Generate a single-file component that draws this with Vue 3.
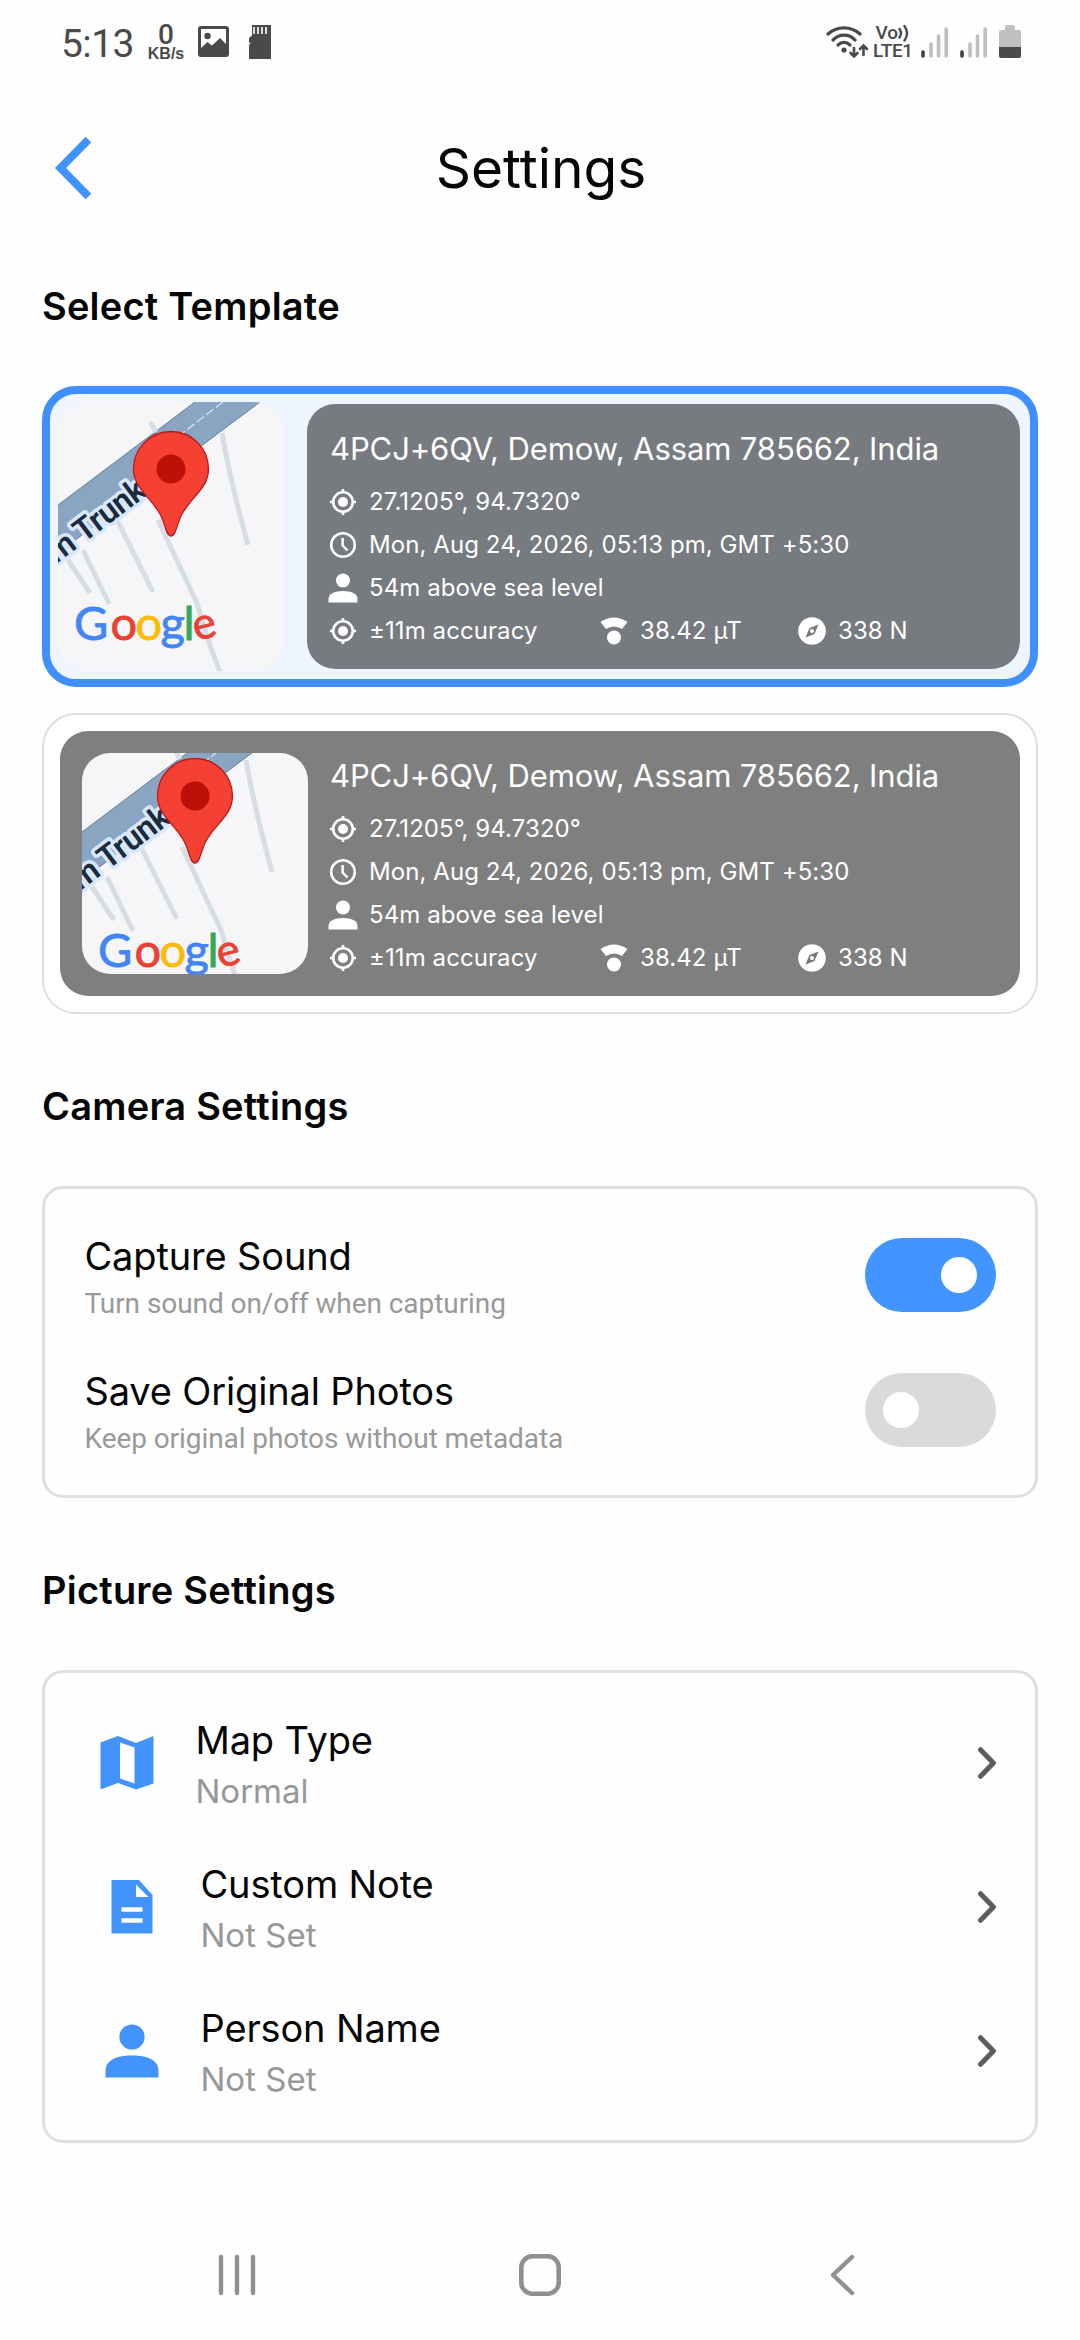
<script setup>
import { ref } from 'vue'

const templates = [
  { id: 'split', viewBox: '0 0 226 269' },
  { id: 'inset', viewBox: '0 24 226 221' }
]

const toggles = ref([
  { title: 'Capture Sound', note: 'Turn sound on/off when capturing', on: true },
  { title: 'Save Original Photos', note: 'Keep original photos without metadata', on: false }
])

const options = [
  { icon: 'map', title: 'Map Type', value: 'Normal' },
  { icon: 'doc', title: 'Custom Note', value: 'Not Set' },
  { icon: 'person', title: 'Person Name', value: 'Not Set' }
]
</script>

<template>
  <div class="screen">
    <header class="status">
      <span class="clock">5:13</span>
      <span class="speed"><b>0</b><i>KB/s</i></span>
      <svg class="pic" width="31" height="31" viewBox="0 0 31 31">
        <path fill-rule="evenodd" fill="#4a4a4a" d="M3 0H28A3 3 0 0 1 31 3V28A3 3 0 0 1 28 31H3A3 3 0 0 1 0 28V3A3 3 0 0 1 3 0ZM3 3V22L9.500 16 14 19.500 22 12 28 18V3Z" />
        <circle cx="9.500" cy="10" r="3.200" fill="#4a4a4a" />
      </svg>
      <svg class="sd" width="24" height="34" viewBox="0 0 24 34">
        <path fill="#4a4a4a" d="M4 0H23V34H1V20L2.500 18.500 1 17V13L4 10.500Z" />
        <path stroke="#fff" stroke-width="1.600" d="M6 2V9M10 2V9M14 2V9M18 2V9" />
      </svg>
      <span class="grow"></span>
      <svg class="wifi" width="43" height="34" viewBox="0 0 43 34" fill="none" stroke="#4a4a4a" stroke-width="3.200" stroke-linecap="round">
        <path d="M2 9C11 .8 25 .8 34 9M7 15C13.500 8.600 23 8.600 29 15M12 20C15.500 16.600 20.500 16.600 24 20" />
        <circle cx="18" cy="25" r="2.600" fill="#4a4a4a" stroke="none" />
        <path stroke-width="2.600" d="M28 23V31M24.500 28 28 31.500 31.500 28M37.500 30V21M34 24 37.500 20.500 41 24" />
      </svg>
      <span class="lte"><span class="vo">Vo<svg width="12" height="18" viewBox="0 0 12 18" fill="none" stroke="#4a4a4a" stroke-width="2.400" stroke-linecap="round"><path d="M1.500 5Q4.500 9 1.500 13.500M6.500 2Q11.500 9 6.500 16.500" /></svg></span><span class="l1">LTE1</span></span>
      <svg v-for="n in 2" :key="n" class="signal" width="28" height="32" viewBox="0 0 28 32" stroke-width="3.600" stroke-linecap="round">
        <path stroke="#404040" d="M2 25V29" />
        <path stroke="#bfbfbf" d="M10 17V29M17.500 9V29M25.200 2V29" />
      </svg>
      <svg class="battery" width="22" height="34" viewBox="0 0 22 34">
        <path fill="#c0c0c0" d="M6 5V2Q6 0 8 0H14Q16 0 16 2V5H20Q22 5 22 7V23H0V7Q0 5 2 5Z" />
        <path fill="#4a4a4a" d="M0 22H22V31Q22 33 20 33H2Q0 33 0 31Z" />
      </svg>
    </header>

    <div class="topbar">
      <svg width="38" height="66" viewBox="0 0 38 66" fill="none" stroke="#3f93ff" stroke-width="8"><path d="M35.500 4.500 7.500 33 35.500 61.500" /></svg>
      <h1>Settings</h1>
      <span class="spacer"></span>
    </div>

    <main>
      <h2 class="first">Select Template</h2>
      <div class="templates">
        <section v-for="t in templates" :key="t.id" class="template" :class="t.id">
          <svg class="map" :viewBox="t.viewBox">
            <rect width="226" height="269" fill="#f6f6f9" />
            <path fill="#89a5c1" d="M137 0 0 103V151L202 0Z" />
            <path stroke="#62809c" fill="none" stroke-width="1" d="M137 0 0 103M202 0 0 151" />
            <path stroke="#dce9f5" fill="none" stroke-width="1.200" stroke-dasharray="9 3" d="M165 0 100 50" />
            <path stroke="#d6dee3" fill="none" stroke-width="5" stroke-linejoin="round" d="M164 31Q172 78 190 143M92 20 98 30M100 118 139 201Q148 235 162 270M59 118 95 190M25 148 51 202M10 158 32 191" />
            <text class="street" transform="translate(-2 162) rotate(-37)">m Trunk</text>
            <path fill="#f54034" stroke="#b81a1c" stroke-width="1.300" d="M113 134C108 134 107 121 102 112 92 94 75.500 86 75.500 67A37.500 37.500 0 0 1 150.500 67C150.500 86 134 94 124 112 119 121 118 134 113 134Z" />
            <circle cx="113" cy="67" r="14.500" fill="#bd1008" />
            <text class="google" x="16 52.5 77.500 102.500 125.500" y="237.500"><tspan class="b">G</tspan><tspan class="r">o</tspan><tspan class="y">o</tspan><tspan class="b">g</tspan><tspan class="g">l</tspan></text>
            <text class="google e r" transform="translate(138 239) rotate(-14)">e</text>
          </svg>
          <div class="info">
            <p class="address">4PCJ+6QV, Demow, Assam 785662, India</p>
            <p class="row">
              <svg viewBox="0 0 30 30"><g fill="none" stroke="#fff" stroke-width="2.600"><circle cx="15" cy="15" r="9.800" /><path d="M15 2V6M15 24V28M2 15H6M24 15H28" /></g><circle cx="15" cy="15" r="5" fill="#fff" /></svg>
              <span>27.1205°, 94.7320°</span>
            </p>
            <p class="row">
              <svg viewBox="0 0 30 30" fill="none" stroke="#fff" stroke-width="2.500"><circle cx="15" cy="15" r="11.800" /><path d="M14.600 8V15.500L19.500 20.500" /></svg>
              <span>Mon, Aug 24, 2026, 05:13 pm, GMT +5:30</span>
            </p>
            <p class="row">
              <svg viewBox="0 0 30 30" fill="#fff"><circle cx="15" cy="7.500" r="7" /><path d="M.5 29.500V26C.5 21 6 18 15 18S29.500 21 29.500 26V29.500Z" /></svg>
              <span>54m above sea level</span>
            </p>
            <p class="row">
              <svg viewBox="0 0 30 30"><g fill="none" stroke="#fff" stroke-width="2.600"><circle cx="15" cy="15" r="9.800" /><path d="M15 2V6M15 24V28M2 15H6M24 15H28" /></g><circle cx="15" cy="15" r="5" fill="#fff" /></svg>
              <span class="accuracy">±11m accuracy</span>
              <svg viewBox="0 0 30 30" fill="#fff"><path d="M1.500 6Q15-3 28.500 6L23 13Q15 8 7 13Z" /><circle cx="15" cy="21.500" r="7" /></svg>
              <span class="field">38.42 µT</span>
              <svg viewBox="0 0 30 30"><circle cx="15" cy="15" r="13.800" fill="#fff" /><path fill="#777a7d" d="M21.500 8.500 17.500 18 8.500 21.500 12.500 12Z" /><circle cx="15" cy="15" r="2" fill="#fff" /></svg>
              <span>338 N</span>
            </p>
          </div>
        </section>
      </div>

      <h2>Camera Settings</h2>
      <section class="card camera">
        <div v-for="t in toggles" :key="t.title" class="toggle-row">
          <div>
            <p class="title">{{ t.title }}</p>
            <p class="note">{{ t.note }}</p>
          </div>
          <button class="switch" :class="{ on: t.on }" role="switch" :aria-checked="t.on" :aria-label="t.title" @click="t.on = !t.on"><span></span></button>
        </div>
      </section>

      <h2>Picture Settings</h2>
      <section class="card picture">
        <div v-for="o in options" :key="o.icon" class="option" :class="o.icon">
          <svg v-if="o.icon === 'map'" width="54" height="54" viewBox="0 0 54 54"><path fill="#4293fc" fill-rule="evenodd" d="M.5 6.500 18 0 36 7 53.500 0V47.500L36 53.500 18 47 .5 53.500ZM20 6.500V42.500L34.500 47.500V11.500Z" /></svg>
          <svg v-else-if="o.icon === 'doc'" width="54" height="54" viewBox="0 0 54 54"><path fill="#4293fc" d="M6.500 0H34L47.500 15V53.500H6.500Z" /><path fill="#fff" d="M31 4.500V17H43.500Z" /><path stroke="#fff" stroke-width="4.600" d="M16.500 29.500H37.500M16.500 40.500H37.500" /></svg>
          <svg v-else width="54" height="54" viewBox="0 0 54 54" fill="#4293fc"><circle cx="27" cy="13" r="12.600" /><path d="M.5 53.500V47C.5 37 10 31.500 27 31.500S53.500 37 53.500 47V53.500Z" /></svg>
          <div class="label">
            <p class="title">{{ o.title }}</p>
            <p class="value">{{ o.value }}</p>
          </div>
          <svg class="go" width="22" height="34" viewBox="0 0 22 34" fill="none" stroke="#5c5c5c" stroke-width="5" stroke-linecap="round" stroke-linejoin="round"><path d="M6.500 2.700 19.400 16 6.500 29.300" /></svg>
        </div>
      </section>
    </main>

    <nav class="nav">
      <svg width="44" height="44" viewBox="0 0 44 44" fill="none" stroke="#909090" stroke-width="4.400" stroke-linecap="round"><path d="M6 4V40M22 4V40M38 4V40" /></svg>
      <svg width="44" height="44" viewBox="0 0 44 44" fill="none" stroke="#909090" stroke-width="4.600"><rect x="3.300" y="3.300" width="37.400" height="37.400" rx="11" /></svg>
      <svg width="44" height="44" viewBox="0 0 44 44" fill="none" stroke="#909090" stroke-width="4.400" stroke-linecap="round" stroke-linejoin="round"><path d="M31 4 12 22 31 40" /></svg>
    </nav>
  </div>
</template>

<style>
body { margin: 0; background: #fefefe; }
</style>

<style scoped>
.screen { width: 1080px; height: 2340px; box-sizing: border-box; display: flex; flex-direction: column; background: #fefefe; font-family: Inter, "Liberation Sans", sans-serif; color: #060606; overflow: hidden; }
p, h1, h2 { margin: 0; font-weight: 400; white-space: nowrap; }
svg { display: block; flex: none; }

.status { height: 88px; display: flex; align-items: flex-start; padding: 0 59px 0 61px; box-sizing: border-box; font-family: Roboto, sans-serif; color: #4a4a4a; }
.clock { font-size: 39px; line-height: 46px; margin-top: 21px; width: 84px; letter-spacing: -0.6px; }
.speed { display: flex; flex-direction: column; align-items: center; width: 42px; margin-top: 19px; }
.speed b { font-size: 28px; line-height: 32px; font-weight: 500; }
.speed i { font: 700 16px/16px "Liberation Sans", sans-serif; margin-top: -5px; }
.pic { margin: 26px 0 0 11px; }
.sd { margin: 25px 0 0 19px; }
.grow { flex: 1; }
.wifi { margin-top: 25px; }
.lte { display: flex; flex-direction: column; width: 40px; margin: 24px 8px 0 4px; font-weight: 500; }
.vo { display: flex; justify-content: flex-end; font-size: 19px; line-height: 18px; padding-right: 3px; }
.l1 { font-size: 19px; line-height: 18px; letter-spacing: -0.3px; }
.signal { margin: 27px 11px 0 0; }
.battery { margin: 25px 0 0 0; }

.topbar { height: 160px; display: flex; align-items: center; justify-content: space-between; padding: 0 53px; }
h1 { font-size: 55px; line-height: 70px; padding-left: 2px; }
.spacer { width: 38px; }

main { flex: 1; padding: 0 42px; }
h2 { font-size: 38px; line-height: 46px; font-weight: 600; margin: 69px 0 57px; letter-spacing: 0.22px; }
h2.first { margin-top: 35px; }

.templates { display: flex; flex-direction: column; gap: 26px; }
.template { height: 301px; box-sizing: border-box; border-radius: 34px; display: flex; }
.split { border: 8px solid #3f8fff; background: #eef5ff; padding: 8px 10px 8px 8px; }
.split .map { width: 226px; height: 269px; border-radius: 30px; margin-right: 23px; }
.split .info { background: #777a7e; margin: 2px 0; width: 713px; border-radius: 28px; padding: 26px 0 0 23px; box-sizing: border-box; }
.inset { border: 2px solid #dedede; padding: 16px; background: #fff; position: relative; }
.inset::before { content: ''; position: absolute; inset: 16px; border-radius: 28px; background: #7f7f7f; }
.inset .map { width: 226px; height: 221px; border-radius: 28px; margin: 22px 0 0 22px; position: relative; }
.inset .info { padding: 26px 0 0 22px; position: relative; }

.street { font: 600 32px Roboto, sans-serif; letter-spacing: -0.3px; fill: #1b2a3c; stroke: #d8e7fc; stroke-width: 7px; paint-order: stroke; stroke-linejoin: round; }
.google { font: 400 47px Lato, sans-serif; stroke-width: 0.8px; }
.google.e { font-size: 44px; }
.b { fill: #4285f4; stroke: #4285f4; }
.r { fill: #e94235; stroke: #e94235; }
.y { fill: #fbbc05; stroke: #fbbc05; }
.g { fill: #34a853; stroke: #34a853; }

.info { color: #fff; }
.address { font-size: 31px; line-height: 38px; margin-bottom: 12px; letter-spacing: -0.11px; }
.row { display: flex; align-items: center; height: 43px; font-size: 24px; line-height: 43px; letter-spacing: 0.08px; }
.row svg { width: 30px; height: 30px; margin: 0 11px 0 -2px; }
.accuracy { width: 232px; }
.field { width: 159px; }

.card { box-sizing: border-box; border: 3px solid #dfdfdf; border-radius: 21px; }
.camera { height: 312px; padding: 44px 39px 0 39.5px; }
.toggle-row { display: flex; justify-content: space-between; height: 135px; align-items: flex-start; }
.title { font-size: 38px; line-height: 46px; letter-spacing: -0.15px; }
.note { font: 28px/34px Roboto, sans-serif; color: #999; margin-top: 8px; letter-spacing: -0.07px; }
.switch { width: 131px; height: 74px; border: 0; border-radius: 37px; background: #dadada; padding: 0 19px 0 18px; margin-top: 5px; display: flex; align-items: center; }
.switch.on { background: #4294ff; justify-content: flex-end; }
.switch span { width: 36px; height: 36px; border-radius: 50%; background: #fff; }

.picture { height: 473px; padding: 44px 39px 0 55px; }
.option { display: flex; height: 144px; align-items: flex-start; }
.option > svg { margin-top: 19px; }
.doc, .person { padding-left: 5px; }
.label { margin-left: 41.5px; flex: 1; }
.value { font-size: 33px; line-height: 40px; color: #979797; margin-top: 8px; }
.option > .go { margin-top: 30px; }

.nav { height: 87px; display: flex; justify-content: space-between; padding: 0 215px 0 215px; align-items: flex-start; }
</style>
